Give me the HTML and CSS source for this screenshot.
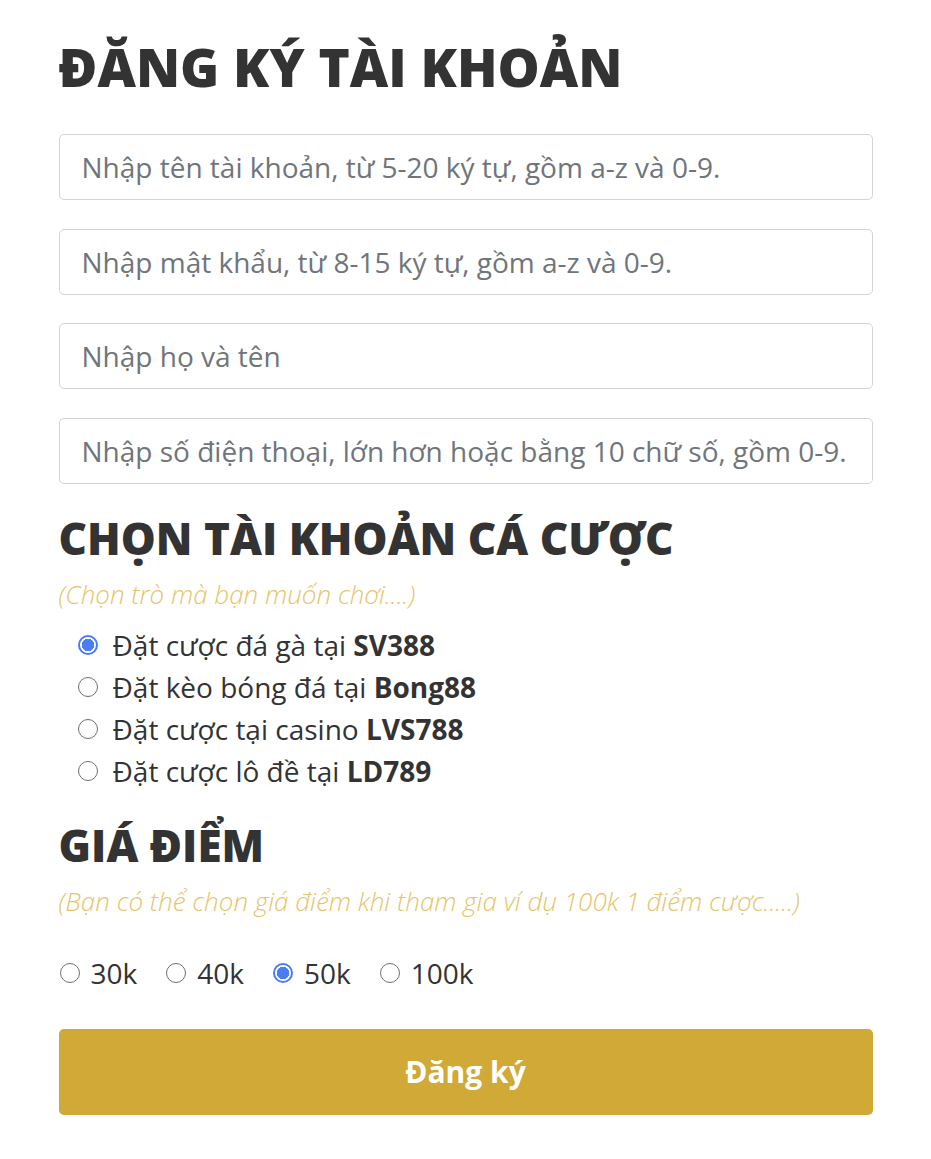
FILE: index.html
```html
<!DOCTYPE html>
<html lang="vi">
<head>
    <meta charset="UTF-8">
    <meta name="viewport" content="width=device-width, initial-scale=1.0">
    <title>Đăng ký tài khoản</title>
    <link rel="stylesheet" href="styles.css">
</head>
<body>
    <div class="register">
        <h1>ĐĂNG KÝ TÀI KHOẢN</h1>

        <form>
            <!-- Thông tin tài khoản -->
            <div class="fields">
                <input type="text" class="form-input" placeholder="Nhập tên tài khoản, từ 5-20 ký tự, gồm a-z và 0-9.">
                <input type="password" class="form-input" placeholder="Nhập mật khẩu, từ 8-15 ký tự, gồm a-z và 0-9.">
                <input type="text" class="form-input" placeholder="Nhập họ và tên">
                <input type="text" class="form-input" placeholder="Nhập số điện thoại, lớn hơn hoặc bằng 10 chữ số, gồm 0-9.">
            </div>

            <!-- Chọn tài khoản -->
            <h2>CHỌN TÀI KHOẢN CÁ CƯỢC</h2>
            <p class="hint">(Chọn trò mà bạn muốn chơi....)</p>
            <div class="game-list">
                <label class="radio-row"><input type="radio" name="game" checked><span>Đặt cược đá gà tại <b>SV388</b></span></label>
                <label class="radio-row"><input type="radio" name="game"><span>Đặt kèo bóng đá tại <b>Bong88</b></span></label>
                <label class="radio-row"><input type="radio" name="game"><span>Đặt cược tại casino <b>LVS788</b></span></label>
                <label class="radio-row"><input type="radio" name="game"><span>Đặt cược lô đề tại <b>LD789</b></span></label>
            </div>

            <!-- Giá điểm -->
            <h2 class="price-title">GIÁ ĐIỂM</h2>
            <p class="hint">(Bạn có thể chọn giá điểm khi tham gia ví dụ 100k 1 điểm cược.....)</p>
            <div class="price-list">
                <label class="radio-inline"><input type="radio" name="price"><span>30k</span></label>
                <label class="radio-inline"><input type="radio" name="price"><span>40k</span></label>
                <label class="radio-inline"><input type="radio" name="price" checked><span>50k</span></label>
                <label class="radio-inline"><input type="radio" name="price"><span>100k</span></label>
            </div>

            <button type="submit" class="btn-submit">Đăng ký</button>
        </form>
    </div>
</body>
</html>
```

FILE: styles.css
```css
* {
    margin: 0;
    padding: 0;
    box-sizing: border-box;
}

body {
    font-family: "Open Sans", Arial, sans-serif;
    background: #fff;
    color: #333;
}

.register {
    width: 814px;
    margin: 0 auto;
    padding: 36px 0 44px;
}

h1 {
    font-size: 53px;
    font-weight: 800;
    line-height: 62px;
    margin-bottom: 36px;
}

h2 {
    font-size: 44px;
    font-weight: 800;
    line-height: 52px;
    margin-top: 28px;
}

.price-title {
    margin-top: 27px;
}

/* Inputs */
.fields {
    display: flex;
    flex-direction: column;
    gap: 28.5px;
}

.form-input {
    width: 100%;
    height: 66px;
    padding: 0 22px;
    border: 1px solid #d4d4d4;
    border-radius: 5px;
    font-family: inherit;
    font-size: 28px;
    color: #333;
}

.form-input::placeholder {
    color: #6f757b;
}

.form-input:focus {
    outline: none;
    border-color: #d0a937;
}

.hint {
    font-size: 26px;
    font-weight: 300;
    font-style: italic;
    color: #e6c46a;
    line-height: 34px;
    margin-top: 13px;
}

/* Radios */
input[type="radio"] {
    appearance: none;
    width: 20px;
    height: 20px;
    border: 1.5px solid #6f6f6f;
    border-radius: 50%;
    background: #fff;
    flex-shrink: 0;
}

input[type="radio"]:checked {
    border: 2px solid #4a7cf6;
    background: radial-gradient(circle, #4a7cf6 0 6px, #fff 6.5px);
}

.game-list {
    padding: 13px 0 0 19px;
}

.radio-row {
    display: flex;
    align-items: center;
    gap: 15px;
    font-size: 28px;
    line-height: 42px;
}

.radio-row b {
    font-weight: 700;
}

.price-list {
    display: flex;
    gap: 29px;
    margin-top: 36px;
    padding-left: 1px;
}

.radio-inline {
    display: flex;
    align-items: center;
    gap: 11px;
    font-size: 28px;
    line-height: 38px;
}

/* Button */
.btn-submit {
    display: block;
    width: 100%;
    height: 86px;
    margin-top: 37px;
    border: none;
    border-radius: 5px;
    background: #d0a937;
    color: #fff;
    font-family: inherit;
    font-size: 30px;
    font-weight: 700;
    cursor: pointer;
}

.btn-submit:hover {
    opacity: 0.9;
}
```
